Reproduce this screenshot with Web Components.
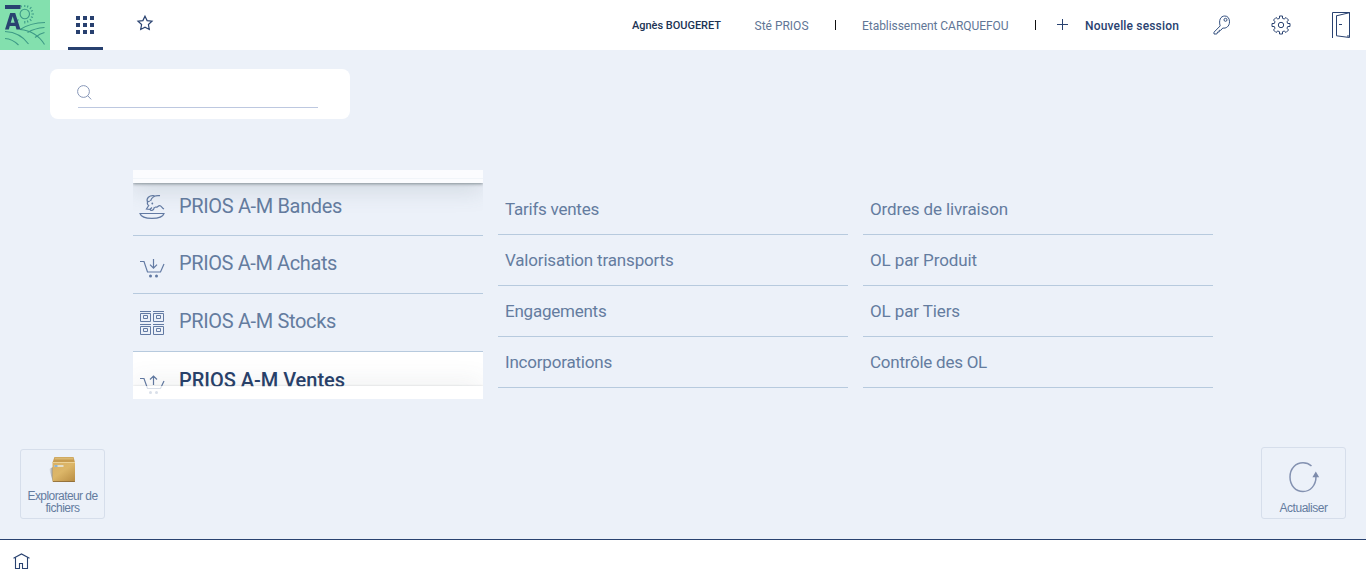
<!DOCTYPE html>
<html lang="fr"><head><meta charset="utf-8"><title>PRIOS</title>
<style>
html,body{margin:0;height:100%;overflow:hidden;background:#ecf1f9}
body{font-family:Roboto,"Open Sans","Liberation Sans",sans-serif;color:#647c9f}
</style></head><body>
<prios-desktop></prios-desktop>
<script>
const ICONS = {
 logo:[50,50,`<rect width="50" height="50" fill="#83e0ae"/><g fill="none" stroke="#3d9a88" stroke-width="1.100"><circle cx="24.800" cy="14" r="4.700"/><path d="M24.800 5v2M24.800 21v2.500M31.500 14h2.500M29.800 8.800l1.600-1.600M29.800 19.200l1.600 1.600M27.300 7.500l.8-2M30.900 11.200l2-.8M30.900 16.800l2 .8M27.300 20.500l.8 2M19 8.500l-1.500-1.500M18.500 19.500l-1.500 1.500M21.500 7.200l-.8-2"/></g><g fill="none" stroke="#3d9a86" stroke-width="1.100"><path d="M5 31.500c9 .5 18 4.500 23.500 12.500M5 38.500c5 .3 9.500 2.500 13.500 6.500M20 29.500c11 1 19 6 24.500 15M20 29.500c7-4.500 15-6.800 25-7M27.500 32.500c5-3 10-4.500 17-5M35 37.500c3-2.500 6-4.300 9.500-5"/></g><path d="M5 5h15.500v4H5z" fill="#294270"/><path d="M5 29.500 10.200 13h5L20.500 29.500h-4l-1-3.500H9.800l-1 3.500zM10.700 22.800h4l-2-6.500z" fill="#294270" fill-rule="evenodd"/>`],
 grid:[18,18,`<path d="M0 0h4v4H0zM7 0h4v4H7zM14 0h4v4h-4zM0 7h4v4H0zM7 7h4v4H7zM14 7h4v4h-4zM0 14h4v4H0zM7 14h4v4H7zM14 14h4v4h-4z" fill="#27406f"/>`],
 star:[16,16,`<path d="M8 1.200l2.100 4.400 4.900.6-3.600 3.300.9 5L8 12.200 3.700 14.500l.9-5L1 6.200l4.900-.6z" fill="none" stroke="#294270" stroke-width="1.200"/>`],
 plus:[12,12,`<path d="M0 6.500h11M5.500 1v11" stroke="#294270" fill="none"/>`],
 key:[18,20,`<path d="M7.200 10.900 1 17.200V19h2.800l.8-2h1.600v-1.700h1.600l2-2.300c3 .7 6.700-1.400 6.700-6.200C16.500 3 14.500 1 11.800 1 7.500 1 5.500 5.500 7.200 10.900z" fill="none" stroke="#34507f" stroke-width="1"/><circle cx="12.500" cy="4.800" r="1.500" fill="none" stroke="#34507f"/>`],
 gear:[20,20,`<path d="M8.500 1h3v2.300l1.700.7L15 2.500 17.500 5 16 6.800l.7 1.700H19v3h-2.300l-.7 1.700 1.500 1.800L15 17.500 13.200 16l-1.700.7V19h-3v-2.300L6.800 16 5 17.500 2.500 15 4 13.200l-.7-1.700H1v-3h2.300L4 6.800 2.500 5 5 2.500 6.800 4l1.700-.7z" fill="none" stroke="#294270"/><circle cx="10" cy="10" r="2.700" fill="none" stroke="#294270"/>`],
 door:[19,27,`<path d="M.5 26V.5h17V24H15M4.500 3.800 17.500.7M4.500 3.500V23.800l13 1.700V.5M7 12.500h3" fill="none" stroke="#294270"/>`],
 search:[15,15,`<circle cx="6.500" cy="6.500" r="5.900" fill="none" stroke="#8797b8"/><path d="m10.600 10.600 3.600 3.800" stroke="#8797b8"/>`],
 bandes:[24,24,`<g fill="none" stroke="#627aa3" stroke-width="1.200"><path d="M0 18.500h24C22 25 2 25 0 18.500zM20 .7C15 0 11.500 2.500 10.500 6M14.500.8C9 0 6 3.500 7.500 7l2.300-1M7.500 7c-.5 2 .2 3 1.200 3.500L6.500 14l3.500.3 2-1.800M10 14.300c.5 1.600 3.500 2.200 4.500-2.300M15 12c2.500 1 2.800-1.300 4.500-1.300 2 0 2.500 2.300 4.500 3.300"/></g><circle cx="12.300" cy="8.500" r=".9" fill="#627aa3"/>`],
 cartin:[24,20,`<path d="M0 2.500h4L7.500 13h13L24 5M13.500 0v9M10 5.700l3.500 3.500L17 5.700" fill="none" stroke="#627aa3" stroke-width="1.200"/><circle cx="10.500" cy="17" r="1.500" fill="#627aa3"/><circle cx="16.500" cy="17" r="1.500" fill="#627aa3"/>`],
 cartout:[24,20,`<path d="M0 3.500h4L7.500 13.500h13L24 6M13.500 10V1M10 4.500 13.500 1 17 4.500" fill="none" stroke="#627aa3" stroke-width="1.200"/><circle cx="10.500" cy="17.500" r="1.500" fill="#627aa3"/><circle cx="16.500" cy="17.500" r="1.500" fill="#627aa3"/>`],
 stocks:[24,24,`<path d="M0 .5h11M13 .5h11M0 13.500h11M13 13.500h11M.5 2.500h10v8H.5zM13.500 2.500h10v8h-10zM.5 15.500h10v8H.5zM13.500 15.500h10v8h-10zM3.500 4.500h4v3h-4zM16.500 4.500h4v3h-4zM3.500 17.500h4v3h-4zM16.500 17.500h4v3h-4z" fill="none" stroke="#627aa3"/>`],
 box:[28,28,`<defs><linearGradient id="f" x2=".8" y2="1"><stop stop-color="#d9b064"/><stop offset=".5" stop-color="#dcb668"/><stop offset="1" stop-color="#bd9248"/></linearGradient><linearGradient id="s"><stop stop-color="#999" stop-opacity="0"/><stop offset="1" stop-color="#666" stop-opacity=".8"/></linearGradient></defs><path d="M1 13 5 11v15z" fill="url(#s)"/><path d="M6.500 1h19l1.500 5.500H4.500z" fill="#c79c50"/><path d="M7 1.500h18l.5 2H6.500z" fill="#dab873"/><path d="M4.500 6h22.500v19q0 1-1 1H5.500q-1 0-1-1z" fill="url(#f)"/><path d="M4.500 6.500H27" stroke="#ecd296"/><path d="M6.500 9h9v2h-9z" fill="#e4dfc8"/><path d="M6.500 9h3v2h-3z" fill="#8eb4d3"/><path d="M5 25.500h22" stroke="#826234" opacity=".7"/>`],
 refresh:[30,32,`<path d="M22.500 5C20 2.700 17.300 1.700 14 1.700 6.700 1.700 1 7.500 1 16S6.700 30.500 14 30.500 27 24.500 27 15.500" fill="none" stroke="#8492b1" stroke-width="1.500"/><path d="M26.800 10.500 30.200 16.200h-6.800z" fill="#7d8bab"/>`],
 home:[17,17,`<path d="M2.500 4.800V15.500H6.500V10.500H9.500V15.500H14.500V4.800M.5 5.300 8.500.9 16.500 5.300" fill="none" stroke="#294270" stroke-width="1.100"/>`]
};
const make=(n,html,init)=>customElements.define(n,class extends HTMLElement{
 constructor(){super();const t=document.createElement('template');t.innerHTML=html;this.attachShadow({mode:'open'}).append(t.content.cloneNode(true))}
 connectedCallback(){init&&init(this,this.shadowRoot)}
});
make('p-icon','',(e,r)=>{const [w,h,b]=ICONS[e.getAttribute('name')];r.innerHTML=`<style>:host{display:block;flex:none;width:${w}px;height:${h}px}svg{display:block;overflow:visible}</style><svg width="${w}" height="${h}" viewBox="0 0 ${w} ${h}">${b}</svg>`});
/* Label whose tracking adapts to the advance width given in "w". */
make('p-label','<style>:host{display:block;flex:none;white-space:nowrap}span{display:inline-block}</style><span><slot></slot></span>',(e,r)=>{const w=+e.getAttribute('w'),s=r.querySelector('span');if(!w)return;s.style.letterSpacing='0';const n=e.textContent.length;s.style.letterSpacing=(w-s.getBoundingClientRect().width)/n+'px';e.style.width=w+'px'});
make('p-menu-row',`<style>:host{display:flex;align-items:center;box-sizing:border-box;height:58px;border-bottom:1px solid #b7cade;padding-left:7px;font-size:20px;line-height:24px}:host([first]){height:57px}:host([active]){background:#fff;color:#27406a;font-weight:500}p-icon{margin-top:var(--dy,0)}p-label{margin:var(--ty,-4px) 0 0 15px}</style>`,
(e,r)=>{if(r.querySelector('p-icon'))return;const c=document.createElement('p-icon');c.setAttribute('name',e.getAttribute('icon'));const m=document.createElement('p-label');m.textContent=e.textContent;m.setAttribute('w',e.getAttribute('w'));r.append(c,m)});
make('p-link',`<style>:host{display:flex;align-items:center;box-sizing:border-box;height:51px;border-bottom:1px solid #b7cade;padding-left:7px;font-size:17px}</style><slot></slot>`);
make('p-tile',`<style>:host{display:flex;flex-direction:column;align-items:center;box-sizing:border-box;width:85px;border:1px solid #d6deeb;border-radius:3px;font:12px/12px "Liberation Sans",Arial,sans-serif}</style><slot></slot>`);
make('p-topbar',`<style>:host{display:flex;align-items:center;height:50px;background:#fff;color:#617696;font-size:12px}
.tab{display:flex;align-items:center;box-sizing:border-box;width:35px;height:50px;margin-left:18px;border-bottom:3px solid #27406f;padding:3px 0 0 8px}
.bar{width:1px;height:10px;background:#111}.user{font-size:11px;font-weight:500;color:#203353}.new{font-weight:500;color:#294270}</style>
<p-icon name="logo"></p-icon><div class="tab"><p-icon name="grid"></p-icon></div><p-icon name="star" style="margin:-4px 1px 0 34px"></p-icon>
<p-label class="user" w="89" style="margin-left:478px">Agnès BOUGERET</p-label><p-label w="54" style="margin:2px 0 0 33.500px">Sté PRIOS</p-label><div class="bar" style="margin-left:26.500px"></div><p-label w="146.500" style="margin:2px 0 0 26px">Etablissement CARQUEFOU</p-label><div class="bar" style="margin-left:26.500px"></div><p-icon name="plus" style="margin:-2px 0 0 21px"></p-icon><p-label class="new" w="94" style="margin:2px 0 0 16px">Nouvelle session</p-label><p-icon name="key" style="margin-left:34px"></p-icon><p-icon name="gear" style="margin-left:40px"></p-icon><p-icon name="door" style="margin-left:41px"></p-icon>`);
make('p-search',`<style>:host{display:block;box-sizing:border-box;width:300px;height:50px;margin:19px 0 0 50px;background:#fff;border-radius:8px;padding:16px 32px 0 28px}.f{height:22px;border-bottom:1px solid #bdc8e0}p-icon{margin-left:-1px}</style><div class="f"><p-icon name="search"></p-icon></div>`);
make('p-menu',`<style>:host{display:block;position:relative;width:350px;height:229px;overflow:hidden}.prev{height:8px;border-bottom:1px solid #b7cade}
.top{position:absolute;inset:0 0 auto;height:13px;background:rgba(255,255,255,.8);box-shadow:0 1px 3px rgba(70,85,90,.6),0 4px 24px rgba(80,100,110,.28)}.bot{position:absolute;inset:auto 0 0;height:13px;background:rgba(255,255,255,.76);box-shadow:0 0 2px rgba(80,90,100,.25),0 -4px 24px rgba(80,90,100,.12)}.bot::before{content:"";position:absolute;left:44px;right:0;top:1px;bottom:0;background:#fff}</style><div class="prev"></div><slot></slot><div class="top"></div><div class="bot"></div>`);
make('prios-desktop',`<style>:host{display:flex;flex-direction:column;height:581px}.cols{display:grid;grid-template-columns:repeat(3,350px);column-gap:15px;margin:51px 0 0 133px}.links{padding-top:14px}.tools{display:flex;justify-content:space-between;align-items:flex-end;margin:auto 20px 20px}.task{display:flex;align-items:center;box-sizing:border-box;height:42px;flex:none;background:#fff;border-top:1px solid #294270;padding:1px 0 0 13px}</style>
<p-topbar></p-topbar><p-search></p-search>
<div class="cols"><p-menu><p-menu-row first icon="bandes" w="163" style="--dy:-1px;--ty:-2px">PRIOS A-M Bandes</p-menu-row><p-menu-row icon="cartin" w="158" style="--dy:9px">PRIOS A-M Achats</p-menu-row><p-menu-row icon="stocks" w="157" style="--dy:0px">PRIOS A-M Stocks</p-menu-row><p-menu-row active icon="cartout" w="166" style="--dy:9px;--ty:-2px">PRIOS A-M Ventes</p-menu-row></p-menu>
<div class="links"><p-link><p-label w="94">Tarifs ventes</p-label></p-link><p-link><p-label w="168.500">Valorisation transports</p-label></p-link><p-link><p-label w="101.500">Engagements</p-label></p-link><p-link><p-label w="107">Incorporations</p-label></p-link></div>
<div class="links"><p-link><p-label w="138">Ordres de livraison</p-label></p-link><p-link><p-label w="107">OL par Produit</p-label></p-link><p-link><p-label w="90">OL par Tiers</p-label></p-link><p-link><p-label w="117">Contrôle des OL</p-label></p-link></div></div>
<div class="tools"><p-tile style="height:70px;padding-top:6px"><p-icon name="box" style="margin-right:1px"></p-icon><p-label w="70" style="margin-top:6px">Explorateur de</p-label><p-label w="34">fichiers</p-label></p-tile><p-tile style="height:72px;padding-top:13px"><p-icon name="refresh"></p-icon><p-label w="48" style="margin-top:9px">Actualiser</p-label></p-tile></div>
<div class="task"><p-icon name="home"></p-icon></div>`);
</script></body></html>
